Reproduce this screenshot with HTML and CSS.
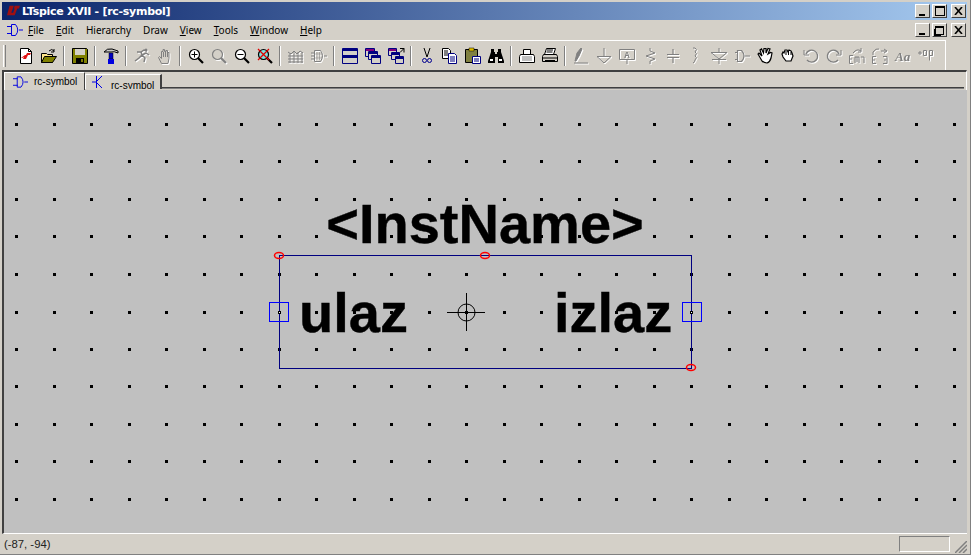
FILE: index.html
```html
<!DOCTYPE html>
<html lang="en">
<head>
<meta charset="utf-8">
<title>LTspice XVII - [rc-symbol]</title>
<link rel="stylesheet" href="styles.css">
</head>
<body>
<div class="window">
  <header class="titlebar">
    <svg class="logo" width="14" height="12" viewBox="0 0 16 14"><path d="M4 1h5L6 9h3l-1 3H1zM10 1h6l-1 3h-2l-3 8H7l3-8H9z" fill="#a01010"/></svg>
    <span class="title-text">LTspice XVII - [rc-symbol]</span>
    <div class="winbtns">
      <button class="wb"><span class="g-min"></span></button>
      <button class="wb"><span class="g-max"></span></button>
      <button class="wb wb-close"><svg width="9" height="8" viewBox="0 0 9 8"><path d="M1 0l7 8M8 0L1 8" stroke="#000" stroke-width="1.6"/></svg></button>
    </div>
  </header>
  <nav class="menubar">
    <svg class="menu-icon" width="16" height="12" viewBox="0 0 16 12"><path d="M0 2.500h5M0 9.500h5M4.500 .5h4q4.500 5.500 0 11h-4zM12 6h4" fill="none" stroke="#0000e0"/></svg>
    <div class="menu-items">
      <span class="mi"><u>F</u>ile</span>
      <span class="mi"><u>E</u>dit</span>
      <span class="mi">Hierarchy</span>
      <span class="mi">Draw</span>
      <span class="mi"><u>V</u>iew</span>
      <span class="mi"><u>T</u>ools</span>
      <span class="mi"><u>W</u>indow</span>
      <span class="mi"><u>H</u>elp</span>
    </div>
    <div class="winbtns">
      <button class="wb"><span class="g-min"></span></button>
      <button class="wb"><span class="g-rest"></span></button>
      <button class="wb wb-close"><svg width="9" height="8" viewBox="0 0 9 8"><path d="M1 0l7 8M8 0L1 8" stroke="#000" stroke-width="1.6"/></svg></button>
    </div>
  </nav>
  <div class="toolbar">
    <span class="grip"></span>
    <span class="tb"><svg class="ic" viewBox="0 0 16 16"><path d="M2.500 .5h8l3 3v12h-11z" fill="#fff" stroke="#000"/><path d="M10.500 .5v3h3" fill="none" stroke="#000"/><path d="M3 10l4-3h1l1-2h4l-1 2h-2l-2 4H5l1-2-2 1z" fill="#e01010"/></svg></span>
    <span class="tb"><svg class="ic" viewBox="0 0 16 16"><path d="M.5 5.500h5l1 1h5v8H.5z" fill="#ffe68a" stroke="#000"/><path d="M.5 14.500l3-6h12l-4 6z" fill="#808000" stroke="#000"/><path d="M8 3q3-3 5 0M13 1v3h-3" fill="none" stroke="#000"/></svg></span>
    <span class="sep"></span>
    <span class="tb"><svg class="ic" viewBox="0 0 16 16"><path d="M.5 .5h14l1 1v14H.5z" fill="#808000" stroke="#000"/><path d="M3 1h10v6H3z" fill="#d4d0c8"/><path d="M4 10h8v5H4z" fill="#000"/><path d="M9 11h2v3H9z" fill="#808000"/></svg></span>
    <span class="sep"></span>
    <span class="tb"><svg class="ic" viewBox="0 0 16 16"><path d="M1 4q3-4 8-3l6 2v2q-4-2-7-1H3z" fill="#c8c8c8" stroke="#000"/><path d="M6 5h4v6H6z" fill="#0000c0" stroke="#000" stroke-width=".5"/><path d="M5 11h6v5H5z" fill="#0000e0"/></svg></span>
    <span class="sep"></span>
    <span class="tb off"><svg class="ic" viewBox="0 0 16 16"><path d="M1 13l4-3 3-3-1-3 3-2 3 1M8 7l3 3-1 4M8 7l4-2 3 2M7 4l-4 0" fill="none" stroke="#808080" stroke-width="1.500"/><circle cx="12" cy="2" r="1.500" fill="#808080"/></svg></span>
    <span class="tb off"><svg class="ic" viewBox="0 0 16 16"><path d="M4.500 15.500l-3-6 1-1 2 2v-7h1.500v-2h1.500v2h1.500v-1h1.500v2h1.500v6l-1 5z" fill="#d4d0c8" stroke="#808080"/><path d="M6.500 4v5M8.500 2.500V9M10.500 3.500V9" stroke="#808080"/></svg></span>
    <span class="sep"></span>
    <span class="tb"><svg class="ic" viewBox="0 0 16 16"><circle cx="6.500" cy="6.500" r="5" fill="#fff" stroke="#000" stroke-width="1.200"/><path d="M3.500 6.500h6M6.500 3.500v6" stroke="#000"/><path d="M10 10l5 5" stroke="#000" stroke-width="2.200"/></svg></span>
    <span class="tb off"><svg class="ic" viewBox="0 0 16 16"><circle cx="6.500" cy="6.500" r="5" fill="#d4d0c8" stroke="#808080" stroke-width="1.200"/><path d="M10 10l5 5" stroke="#808080" stroke-width="2.200"/></svg></span>
    <span class="tb"><svg class="ic" viewBox="0 0 16 16"><circle cx="6.500" cy="6.500" r="5" fill="#fff" stroke="#000" stroke-width="1.200"/><path d="M3.500 6.500h6" stroke="#000"/><path d="M10 10l5 5" stroke="#000" stroke-width="2.200"/></svg></span>
    <span class="tb"><svg class="ic" viewBox="0 0 16 16"><circle cx="6.500" cy="6.500" r="5" fill="#80e0e0" stroke="#000" stroke-width="1.200"/><path d="M10 10l5 5" stroke="#000" stroke-width="2.200"/><path d="M1 1l11 11M12 1L1 12" stroke="#e00000" stroke-width="1.300"/></svg></span>
    <span class="sep"></span>
    <span class="tb off"><svg class="ic" viewBox="0 0 16 16"><path d="M0 4l3 2 3-3 3 3 3-3 3 2M0 8h15M0 11h15M0 14h15M2 5v10M6 4v11M10 4v11M14 4v11" fill="none" stroke="#808080"/></svg></span>
    <span class="tb off"><svg class="ic" viewBox="0 0 16 16"><path d="M3.500 2.500h6q4 5 0 11h-6zM0 5h3M0 8h3M0 11h3M13 8h3" fill="none" stroke="#808080"/><path d="M6 4.500v7M8.500 4.500v7M3.500 6h7M3.500 10h7" stroke="#808080" stroke-dasharray="1 1"/></svg></span>
    <span class="sep"></span>
    <span class="tb"><svg class="ic" viewBox="0 0 16 16"><path d="M.5 .5h15v15H.5z" fill="#d4d0c8" stroke="#000080"/><path d="M1 1h14v2H1zM1 7h14v3H1z" fill="#000080"/></svg></span>
    <span class="tb"><svg class="ic" viewBox="0 0 16 16"><path d="M.5 .5h9v8h-9z" fill="#d4d0c8" stroke="#000080"/><path d="M1 1h8v2H1z" fill="#800080"/><path d="M3.500 3.500h9v8h-9z" fill="#d4d0c8" stroke="#000080"/><path d="M4 4h8v2H4z" fill="#000080"/><path d="M6.500 7.500h9v8h-9z" fill="#d4d0c8" stroke="#000080"/><path d="M7 8h8v2H7z" fill="#000080"/></svg></span>
    <span class="tb"><svg class="ic" viewBox="0 0 16 16"><path d="M.5 .5h8v7h-8z" fill="#d4d0c8" stroke="#000080"/><path d="M1 1h7v2H1z" fill="#800080"/><path d="M3.500 4.500h8v7h-8z" fill="#d4d0c8" stroke="#000080"/><path d="M4 5h7v2H4z" fill="#000080"/><path d="M7.500 8.500h8v7h-8z" fill="#d4d0c8" stroke="#000080"/><path d="M8 9h7v2H8z" fill="#000080"/><path d="M12 .5h4v4M16 .5l-4 4" fill="none" stroke="#000"/></svg></span>
    <span class="sep"></span>
    <span class="tb"><svg class="ic" viewBox="0 0 16 16"><path d="M5 0l3 9M11 0L8 9" stroke="#000" fill="none"/><circle cx="5.500" cy="12.500" r="2" fill="none" stroke="#000090"/><circle cx="10.500" cy="12.500" r="2" fill="none" stroke="#000090"/></svg></span>
    <span class="tb"><svg class="ic" viewBox="0 0 16 16"><path d="M.5 .5h6l2 2v8h-8z" fill="#fff" stroke="#000"/><path d="M2 3h4M2 5h4M2 7h4" stroke="#000"/><path d="M6.500 5.500h6l2 2v8h-8z" fill="#fff" stroke="#000080"/><path d="M8 9h5M8 11h5M8 13h5" stroke="#000080"/></svg></span>
    <span class="tb"><svg class="ic" viewBox="0 0 16 16"><path d="M.5 1.500h12v13H.5z" fill="#808040" stroke="#000"/><path d="M4 0h5v3H4z" fill="#e0c000" stroke="#000" stroke-width=".5"/><path d="M7.500 8.500h8v7h-8z" fill="#fff" stroke="#000080"/><path d="M9 11h5M9 13h5" stroke="#000080"/></svg></span>
    <span class="tb"><svg class="ic" viewBox="0 0 16 16"><path d="M3 1h3v3h1v2h2V4h1V1h3v3l3 9v2h-6V9H7v6H0v-2l3-9z" fill="#000"/><path d="M2 11h3v2H2zM11 11h3v2h-3z" fill="#fff"/></svg></span>
    <span class="sep"></span>
    <span class="tb"><svg class="ic" viewBox="0 0 16 16"><path d="M4.500 1.500h7v6h-7z" fill="#fff" stroke="#000"/><path d="M1.500 6.500h13l1 2v6H.5v-6z" fill="#fff" stroke="#000"/><path d="M3 8h10v5H3z" fill="#c0c0c0"/></svg></span>
    <span class="tb"><svg class="ic" viewBox="0 0 16 16"><path d="M4.500 .5h9l-2 6h-9z" fill="#fff" stroke="#000"/><path d="M1.500 6.500h13l1 2v5H.5v-5z" fill="#d4d0c8" stroke="#000"/><path d="M1 10h14M3 12.500h10" stroke="#000"/><path d="M5 2h6M4.500 4h6" stroke="#000"/></svg></span>
    <span class="sep"></span>
    <span class="tb off"><svg class="ic" viewBox="0 0 16 16"><path d="M1 15h14" stroke="#808080"/><path d="M2 13l2-8 4-5 1 1-3 7-3 5z" fill="#808080" stroke="#808080"/></svg></span>
    <span class="tb off"><svg class="ic" viewBox="0 0 16 16"><path d="M8 0v8M1 8.500h14L8 15z" fill="none" stroke="#808080"/></svg></span>
    <span class="tb off"><svg class="ic" viewBox="0 0 16 16"><path d="M.5 1.500h15v10H.5zM8 12v4" fill="none" stroke="#808080"/><text class="ic-a" x="8" y="10">A</text></svg></span>
    <span class="tb off"><svg class="ic" viewBox="0 0 16 16"><path d="M8 0v3l5 2-9 3 9 3-5 2v3" fill="none" stroke="#808080"/></svg></span>
    <span class="tb off"><svg class="ic" viewBox="0 0 16 16"><path d="M8 1v5M2 6.500h12M2 9.500h12M8 10v5" fill="none" stroke="#808080" stroke-width="1.200"/></svg></span>
    <span class="tb off"><svg class="ic" viewBox="0 0 16 16"><path d="M5 0h2q3 1 0 4q3 1 0 4q3 1 0 4q0 2-2 3" fill="none" stroke="#808080"/></svg></span>
    <span class="tb off"><svg class="ic" viewBox="0 0 16 16"><path d="M8 0v5M0 4.500h16L8 11zM1 11.500h14M8 11v5" fill="none" stroke="#808080"/></svg></span>
    <span class="tb off"><svg class="ic" viewBox="0 0 16 16"><path d="M1 4.500h3M1 11.500h3M3.500 2.500h4q5 5.500 0 11h-4zM11 8h5" fill="none" stroke="#808080" stroke-width="1.200"/></svg></span>
    <span class="tb"><svg class="ic" viewBox="0 0 16 16"><path d="M1 6l4 7q2 2 5 2 3-1 4-5l1-5-1.500-.5L11 6l2-5-2-.5L9 5 9 .5 7 .5 6.500 5 4.500 1 3 2l2 6-3-3z" fill="#fff" stroke="#000" stroke-width="1.200"/></svg></span>
    <span class="tb"><svg class="ic" viewBox="0 0 16 16"><path d="M2 6l1-2 1 1 1-3 2 0 1 2 1-2 2 1 1 2 1 3-2 5H6L3 9z" fill="#fff" stroke="#000" stroke-width="1.200"/><path d="M6 3v4M8.500 3v4M11 4v3" stroke="#000"/></svg></span>
    <span class="tb off"><svg class="ic" viewBox="0 0 16 16"><path d="M3 6a6 6 0 1 1 1 6" fill="none" stroke="#808080" stroke-width="1.400"/><path d="M1 2v5h5" fill="none" stroke="#808080"/></svg></span>
    <span class="tb off"><svg class="ic" viewBox="0 0 16 16"><path d="M13 6a6 6 0 1 0-1 6" fill="none" stroke="#808080" stroke-width="1.400"/><path d="M15 2v5h-5" fill="none" stroke="#808080"/></svg></span>
    <span class="tb off"><svg class="ic" viewBox="0 0 16 16"><path d="M4 5q4-5 8-2M12 0v4H9M.5 7.500H4M.5 7.500v8H4M1 11h2M6 15V9h4v6M8 9v5M12 9h3v6" fill="none" stroke="#808080"/></svg></span>
    <span class="tb off"><svg class="ic" viewBox="0 0 16 16"><path d="M1 7V4q3-4 6-3M12 1l3 2-3 2M9 3h5M.5 8.500H4M.5 8.500v7H4M1 12h2M11 8.500h4v7h-4M12 12h2" fill="none" stroke="#808080"/></svg></span>
    <span class="tb off"><svg class="ic" viewBox="0 0 16 16"><text class="ic-aa" x="0" y="13">Aa</text></svg></span>
    <span class="tb off"><svg class="ic" viewBox="0 0 16 16"><path d="M1 4h2v2H1zM5.500 2.500h3v5h-3zM11.500 2.500h3v5h-3zM11.500 2.500v10" fill="none" stroke="#808080"/></svg></span>
  </div>
  <main class="client">
    <div class="tabstrip">
      <div class="tab tab-active">
        <svg class="tab-ic" width="15" height="12" viewBox="0 0 16 12"><path d="M0 2.500h5M0 9.500h5M4.500 .5h4q4.500 5.500 0 11h-4zM12 6h4" fill="none" stroke="#0000e0"/></svg>
        <span>rc-symbol</span>
      </div>
      <div class="tab tab-other">
        <svg class="tab-ic" width="11" height="14" viewBox="0 0 11 14"><path d="M0 7h4M4.500 1v12M5 6l5-5M5 8l5 5" fill="none" stroke="#0000e0"/></svg>
        <span class="tab-clip">rc-symbol</span>
      </div>
      <div class="tabrest"></div>
    </div>
    <svg class="sheet" width="963" height="443" viewBox="4 90 963 443">
      <defs>
        <g id="row">
          <rect class="dot" x="15" width="3" height="3"/><rect class="dot" x="53" width="3" height="3"/><rect class="dot" x="90" width="3" height="3"/><rect class="dot" x="128" width="3" height="3"/><rect class="dot" x="165" width="3" height="3"/><rect class="dot" x="203" width="3" height="3"/><rect class="dot" x="240" width="3" height="3"/><rect class="dot" x="278" width="3" height="3"/><rect class="dot" x="315" width="3" height="3"/><rect class="dot" x="353" width="3" height="3"/><rect class="dot" x="390" width="3" height="3"/><rect class="dot" x="428" width="3" height="3"/><rect class="dot" x="465" width="3" height="3"/><rect class="dot" x="503" width="3" height="3"/><rect class="dot" x="540" width="3" height="3"/><rect class="dot" x="578" width="3" height="3"/><rect class="dot" x="615" width="3" height="3"/><rect class="dot" x="653" width="3" height="3"/><rect class="dot" x="690" width="3" height="3"/><rect class="dot" x="728" width="3" height="3"/><rect class="dot" x="765" width="3" height="3"/><rect class="dot" x="803" width="3" height="3"/><rect class="dot" x="840" width="3" height="3"/><rect class="dot" x="878" width="3" height="3"/><rect class="dot" x="915" width="3" height="3"/><rect class="dot" x="953" width="3" height="3"/>
        </g>
      </defs>
      <use href="#row" y="123"/><use href="#row" y="160"/><use href="#row" y="198"/><use href="#row" y="235"/><use href="#row" y="273"/><use href="#row" y="311"/><use href="#row" y="348"/><use href="#row" y="385"/><use href="#row" y="423"/><use href="#row" y="460"/><use href="#row" y="498"/>
      <text class="big" x="485" y="243" text-anchor="middle">&lt;InstName&gt;</text>
      <text class="big" x="299" y="332">ulaz</text>
      <text class="big" x="554" y="332">izlaz</text>
      <rect class="outline" x="279.500" y="255.500" width="412" height="113"/>
      <rect class="pin" x="269.500" y="302.500" width="19" height="19"/>
      <rect class="pin" x="682.500" y="302.500" width="19" height="19"/>
      <rect class="pin-c" x="278.500" y="311.500" width="2" height="2"/>
      <rect class="pin-c" x="690.500" y="311.500" width="2" height="2"/>
      <ellipse class="handle" cx="279" cy="255.500" rx="4.500" ry="3"/>
      <ellipse class="handle" cx="485" cy="255.500" rx="4.500" ry="3"/>
      <ellipse class="handle" cx="691" cy="367.500" rx="4.500" ry="3"/>
      <circle class="cross" cx="466.500" cy="312.500" r="8.500"/>
      <path class="cross" d="M447 312.500h38M466.500 293v38"/>
    </svg>
  </main>
  <footer class="statusbar">
    <span class="coords">(-87, -94)</span>
    <span class="status-box"></span>
    <svg class="sizegrip" width="12" height="12" viewBox="0 0 12 12"><path d="M0 12L12 0M4 12l8-8M8 12l4-4" stroke="#808080" stroke-width="1.500"/></svg>
  </footer>
</div>
</body>
</html>
```
FILE: styles.css
```css
* { box-sizing: border-box; }
html, body { margin: 0; padding: 0; }
body { width: 971px; height: 555px; overflow: hidden; background: #d4d0c8; font-family: "Liberation Sans", Arial, sans-serif; font-size: 11px; color: #000; }
.window { width: 971px; height: 555px; display: flex; flex-direction: column; border-right: 1px solid #808080; border-bottom: 1px solid #808080; overflow: hidden; }

.titlebar { height: 18px; margin: 2px 3px 0 2px; padding-left: 4px; flex: none; display: flex; align-items: center; background: linear-gradient(90deg, #0a246a, #a6caf0); color: #fff; }
.logo { flex: none; margin-right: 2px; }
.title-text { font-family: "DejaVu Sans", sans-serif; font-weight: 700; font-size: 11px; letter-spacing: -.28px; white-space: nowrap; }
.winbtns { margin-left: auto; display: flex; gap: 2px; flex: none; padding-right: 1px; }
.winbtns .wb:nth-child(2) { margin-right: 2px; }
.wb { width: 15px; height: 14px; padding: 0; margin: 0; display: flex; align-items: center; justify-content: center; background: #d4d0c8; border: 1px solid; border-color: #fff #404040 #404040 #fff; position: relative; }
.g-min { width: 6px; height: 2px; background: #000; align-self: flex-end; margin-bottom: 1px; margin-right: 2px; }
.g-max { width: 10px; height: 10px; border: 1px solid #000; border-top-width: 2px; }
.g-rest { width: 9px; height: 9px; border: 1px solid #000; border-top-width: 2px; box-shadow: inset -3px -3px 0 #d4d0c8, -2px 2px 0 -1px #000; }

.menubar { height: 20px; flex: none; margin: 0 3px 0 2px; padding-left: 5px; display: flex; align-items: center; }
.menu-icon { flex: none; margin-right: 5px; }
.menu-items { display: flex; gap: 12px; font-family: "Noto Sans", sans-serif; font-size: 10px; color: #000; }
.mi { white-space: nowrap; }

.toolbar { height: 30px; width: 946px; flex: none; padding-left: 3px; display: flex; align-items: center; border-top: 1px solid #fff; border-right: 1px solid #fff; }
.grip { width: 3px; height: 22px; margin-right: 8px; flex: none; border-left: 1px solid #fff; border-right: 1px solid #808080; background: #d4d0c8; }
.tb { width: 23px; height: 22px; flex: none; display: flex; align-items: center; justify-content: center; }
.ic { width: 16px; height: 16px; display: block; overflow: visible; }
.off .ic { filter: drop-shadow(1px 1px 0 #fff); }
.ic-a { font-family: "Liberation Mono", monospace; font-size: 9px; font-weight: 700; fill: #808080; text-anchor: middle; }
.ic-aa { font-family: "Liberation Serif", serif; font-size: 13px; font-style: italic; font-weight: 700; fill: #808080; }
.sep { width: 2px; height: 20px; margin: 0 3px; flex: none; border-left: 1px solid #808080; border-right: 1px solid #fff; }

.client { flex: none; height: 464px; margin: 0 3px 0 2px; display: flex; flex-direction: column; border-top: 2px solid #404040; border-left: 2px solid #404040; border-right: 1px solid #fff; border-bottom: 1px solid #fff; background: #c0c0c0; }
.tabstrip { height: 18px; flex: none; display: flex; align-items: flex-end; background: #d4d0c8; }
.tab { display: flex; align-items: center; flex: none; overflow: hidden; font-family: "Liberation Sans", sans-serif; font-size: 10px; }
.tab-active { width: 81px; height: 18px; padding-left: 8px; gap: 6px; border-top: 1px solid #fff; border-left: 1px solid #fff; border-right: 1px solid #404040; }
.tab-other { width: 77px; height: 15px; margin-bottom: 1px; padding-left: 6px; gap: 8px; border-top: 1px solid #fff; border-left: 1px solid #fff; border-right: 2px solid #404040; }
.tab-clip { position: relative; top: 3px; }
.tabrest { flex: 1; height: 2px; margin: 0 2px 1px 0; border-top: 1px solid #404040; border-bottom: 1px solid #808080; }
.sheet { display: block; flex: none; background: #c0c0c0; }
.dot { fill: #000; }
.big { font-family: "Liberation Sans", Arial, sans-serif; font-weight: 700; font-size: 56px; fill: #000; stroke: #000; stroke-width: .4px; }
.outline { fill: none; stroke: #000080; }
.pin { fill: none; stroke: #0000ff; }
.pin-c { fill: #fff; stroke: #000; }
.handle { fill: none; stroke: #ff0000; stroke-width: 1.500px; }
.cross { fill: none; stroke: #000; }

.statusbar { flex: 1; min-height: 0; display: flex; align-items: center; padding: 0 3px 0 4px; }
.coords { font-family: "Liberation Sans", sans-serif; font-size: 11.3px; color: #222; }
.status-box { width: 51px; height: 16px; margin-left: auto; margin-right: 5px; border: 1px solid; border-color: #808080 #fff #fff #808080; }
.sizegrip { align-self: flex-end; flex: none; margin-bottom: 1px; }
```
